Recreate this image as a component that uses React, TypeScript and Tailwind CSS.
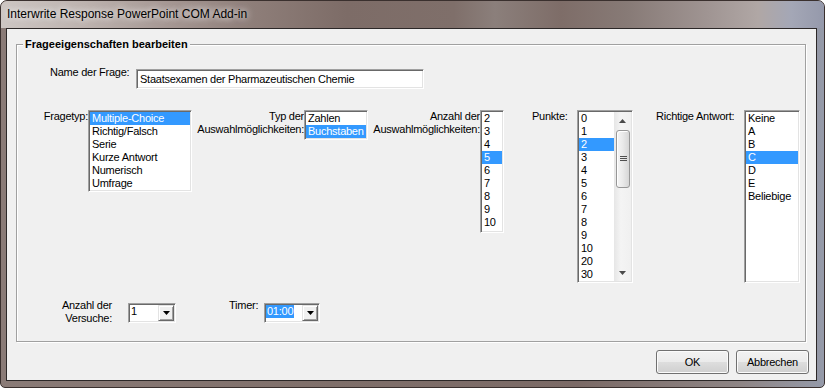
import React from "react"

type ListProps = { items: string[]; selected: number; className: string }

const sunken =
  "bg-white border border-t-[#a0a0a0] border-l-[#a0a0a0] border-r-white border-b-white p-px shadow-[inset_1px_1px_0_#696969,inset_-1px_-1px_0_#e3e3e3]"

function Items({ items, selected }: { items: string[]; selected: number }) {
  return (
    <>
      {items.map((it, i) => (
        <div
          key={it}
          className={`h-[13px] px-[2px] leading-[13px] whitespace-nowrap ${
            i === selected ? "bg-[#3399ff] text-white" : "text-black"
          }`}
        >
          {it}
        </div>
      ))}
    </>
  )
}

function ListBox({ items, selected, className }: ListProps) {
  return (
    <div className={`${sunken} ${className}`}>
      <Items items={items} selected={selected} />
    </div>
  )
}

function Arrow() {
  return (
    <svg width="7" height="4" viewBox="0 0 7 4">
      <path d="M0 0 L7 0 L3.5 4 Z" fill="#000" />
    </svg>
  )
}

function ScrollList({ items, selected }: { items: string[]; selected: number }) {
  return (
    <div className={`${sunken} flex w-[56px] h-[173px]`}>
      <div className="flex-1 overflow-hidden">
        <Items items={items} selected={selected} />
      </div>
      <div className="w-[17px] flex flex-col bg-[linear-gradient(90deg,#e6e6e6,#f4f4f4_40%,#f0f0f0)]">
        <div className="h-[17px] flex items-center justify-center">
          <svg width="7" height="4" viewBox="0 0 7 4">
            <path d="M0 4 L3.5 0 L7 4 Z" fill="#4a4a4a" />
          </svg>
        </div>
        <div className="flex-1 pt-px pl-[2px] pr-[1px]">
          <div className="h-[58px] rounded-[3px] border border-[#979797] bg-[linear-gradient(90deg,#f6f6f6,#e9e9e9_50%,#d6d6d6)] shadow-[inset_1px_1px_0_#fff] flex items-center justify-center">
            <svg width="7" height="6" viewBox="0 0 7 6">
              <path d="M0 0.5 H7 M0 2.5 H7 M0 4.5 H7" stroke="#4f4f4f" strokeWidth="1" />
            </svg>
          </div>
        </div>
        <div className="h-[17px] flex items-center justify-center">
          <svg width="7" height="4" viewBox="0 0 7 4">
            <path d="M0 0 L7 0 L3.5 4 Z" fill="#4a4a4a" />
          </svg>
        </div>
      </div>
    </div>
  )
}

function Combo({ value, selected, className }: { value: string; selected?: boolean; className: string }) {
  return (
    <div className={`${sunken} flex h-[20px] ${className}`}>
      <div className="flex-1 flex items-start">
        <span className={`leading-[13px] ${selected ? "bg-[#3399ff] text-white px-px" : "pl-px text-black"}`}>
          {value}
        </span>
      </div>
      <div className="w-[16px] h-full bg-[#f0f0f0] border border-t-[#e3e3e3] border-l-[#e3e3e3] border-r-[#696969] border-b-[#696969] shadow-[inset_1px_1px_0_#fff,inset_-1px_-1px_0_#a0a0a0] flex items-center justify-center">
        <Arrow />
      </div>
    </div>
  )
}

function WinButton({ label }: { label: string }) {
  return (
    <button className="w-[73px] h-[24px] rounded-[3px] border border-[#707070] bg-[linear-gradient(#f2f2f2_0%,#ebebeb_48%,#dddddd_52%,#cfcfcf_100%)] shadow-[inset_0_0_0_1px_#fbfbfb] text-black text-[11px] leading-[13px] tracking-[-0.25px]">
      {label}
    </button>
  )
}

export default function App() {
  return (
    <div className="w-[825px] h-[388px] flex flex-col overflow-hidden rounded-t-[7px] rounded-b-[5px] border border-[#3a302e] bg-[linear-gradient(90deg,#8a7b77_0%,#7f6f6a_40%,#7b6a66_70%,#8e8585_90%,#959aa9_100%)] font-['Liberation_Sans',Arial,sans-serif] text-[11px] leading-[13px] text-black">
      {/* title bar */}
      <div className="h-[27px] shrink-0 pl-[6px] pt-[5px] bg-[linear-gradient(90deg,#cdc6c3_0%,#bdb3af_10%,#a69894_20%,#8f7f7a_30%,#7d6c67_42%,#7f6f6a_55%,#8b7f7b_60%,#7e6d68_68%,#877a76_76%,#a09593_86%,#b0a7a5_92%,#a4a7b6_96%,#9599ab_100%)]">
        <span className="text-[12px] leading-[16px] text-black [text-shadow:0_0_6px_rgba(255,255,255,0.9),0_0_10px_rgba(255,255,255,0.6)]">
          Interwrite Response PowerPoint COM Add-in
        </span>
      </div>

      <div className="flex-1 pl-[5px] pr-[7px] pb-[6px]">
        <div className="h-[353px] border border-[#2c2828] bg-[#f0f0f0] flex flex-col tracking-[-0.25px]">
          <fieldset className="mt-[9px] ml-[9px] w-[790px] border border-[#a0a0a0] pb-[16px] shadow-[1px_1px_0_#fff,inset_1px_1px_0_#fff]">
            <legend className="ml-[6px] px-[2px] bg-[#f0f0f0] font-bold text-[11px] leading-[13px] tracking-normal">
              Frageeigenschaften bearbeiten
            </legend>

            {/* name row */}
            <div className="mt-[15px] flex items-start">
              <div className="ml-[33px] w-[86px]">Name der Frage:</div>
              <div className={`${sunken} mt-[3px] w-[288px] h-[20px] pl-[3px] flex items-center`}>
                Staatsexamen der Pharmazeutischen Chemie
              </div>
            </div>

            {/* lists row */}
            <div className="mt-[21px] flex items-start">
              <div className="w-[71px] flex justify-end whitespace-nowrap">Fragetyp:</div>
              <ListBox
                className="w-[104px] h-[82px]"
                selected={0}
                items={["Multiple-Choice", "Richtig/Falsch", "Serie", "Kurze Antwort", "Numerisch", "Umfrage"]}
              />
              <div className="w-[112px] flex flex-col items-end whitespace-nowrap">
                <span>Typ der</span>
                <span>Auswahlmöglichkeiten:</span>
              </div>
              <ListBox className="w-[64px] h-[30px]" selected={1} items={["Zahlen", "Buchstaben"]} />
              <div className="w-[112px] flex flex-col items-end whitespace-nowrap">
                <span>Anzahl der</span>
                <span>Auswahlmöglichkeiten:</span>
              </div>
              <ListBox
                className="w-[24px] h-[123px]"
                selected={3}
                items={["2", "3", "4", "5", "6", "7", "8", "9", "10"]}
              />
              <div className="ml-[28px] w-[45px]">Punkte:</div>
              <ScrollList
                selected={2}
                items={["0", "1", "2", "3", "4", "5", "6", "7", "8", "9", "10", "20", "30"]}
              />
              <div className="ml-[23px] w-[88px] whitespace-nowrap">Richtige Antwort:</div>
              <ListBox
                className="w-[56px] h-[173px]"
                selected={3}
                items={["Keine", "A", "B", "C", "D", "E", "Beliebige"]}
              />
            </div>

            {/* bottom row */}
            <div className="mt-[16px] flex items-start">
              <div className="w-[95px] flex flex-col items-end whitespace-nowrap">
                <span>Anzahl der</span>
                <span>Versuche:</span>
              </div>
              <Combo className="ml-[16px] mt-[4px] w-[48px]" value="1" />
              <div className="ml-[53px] w-[35px]">Timer:</div>
              <Combo className="mt-[4px] w-[56px]" value="01:00" selected />
            </div>
          </fieldset>

          <div className="mt-[8px] pr-[7px] flex justify-end gap-[7px]">
            <WinButton label="OK" />
            <WinButton label="Abbrechen" />
          </div>
        </div>
      </div>
    </div>
  )
}
